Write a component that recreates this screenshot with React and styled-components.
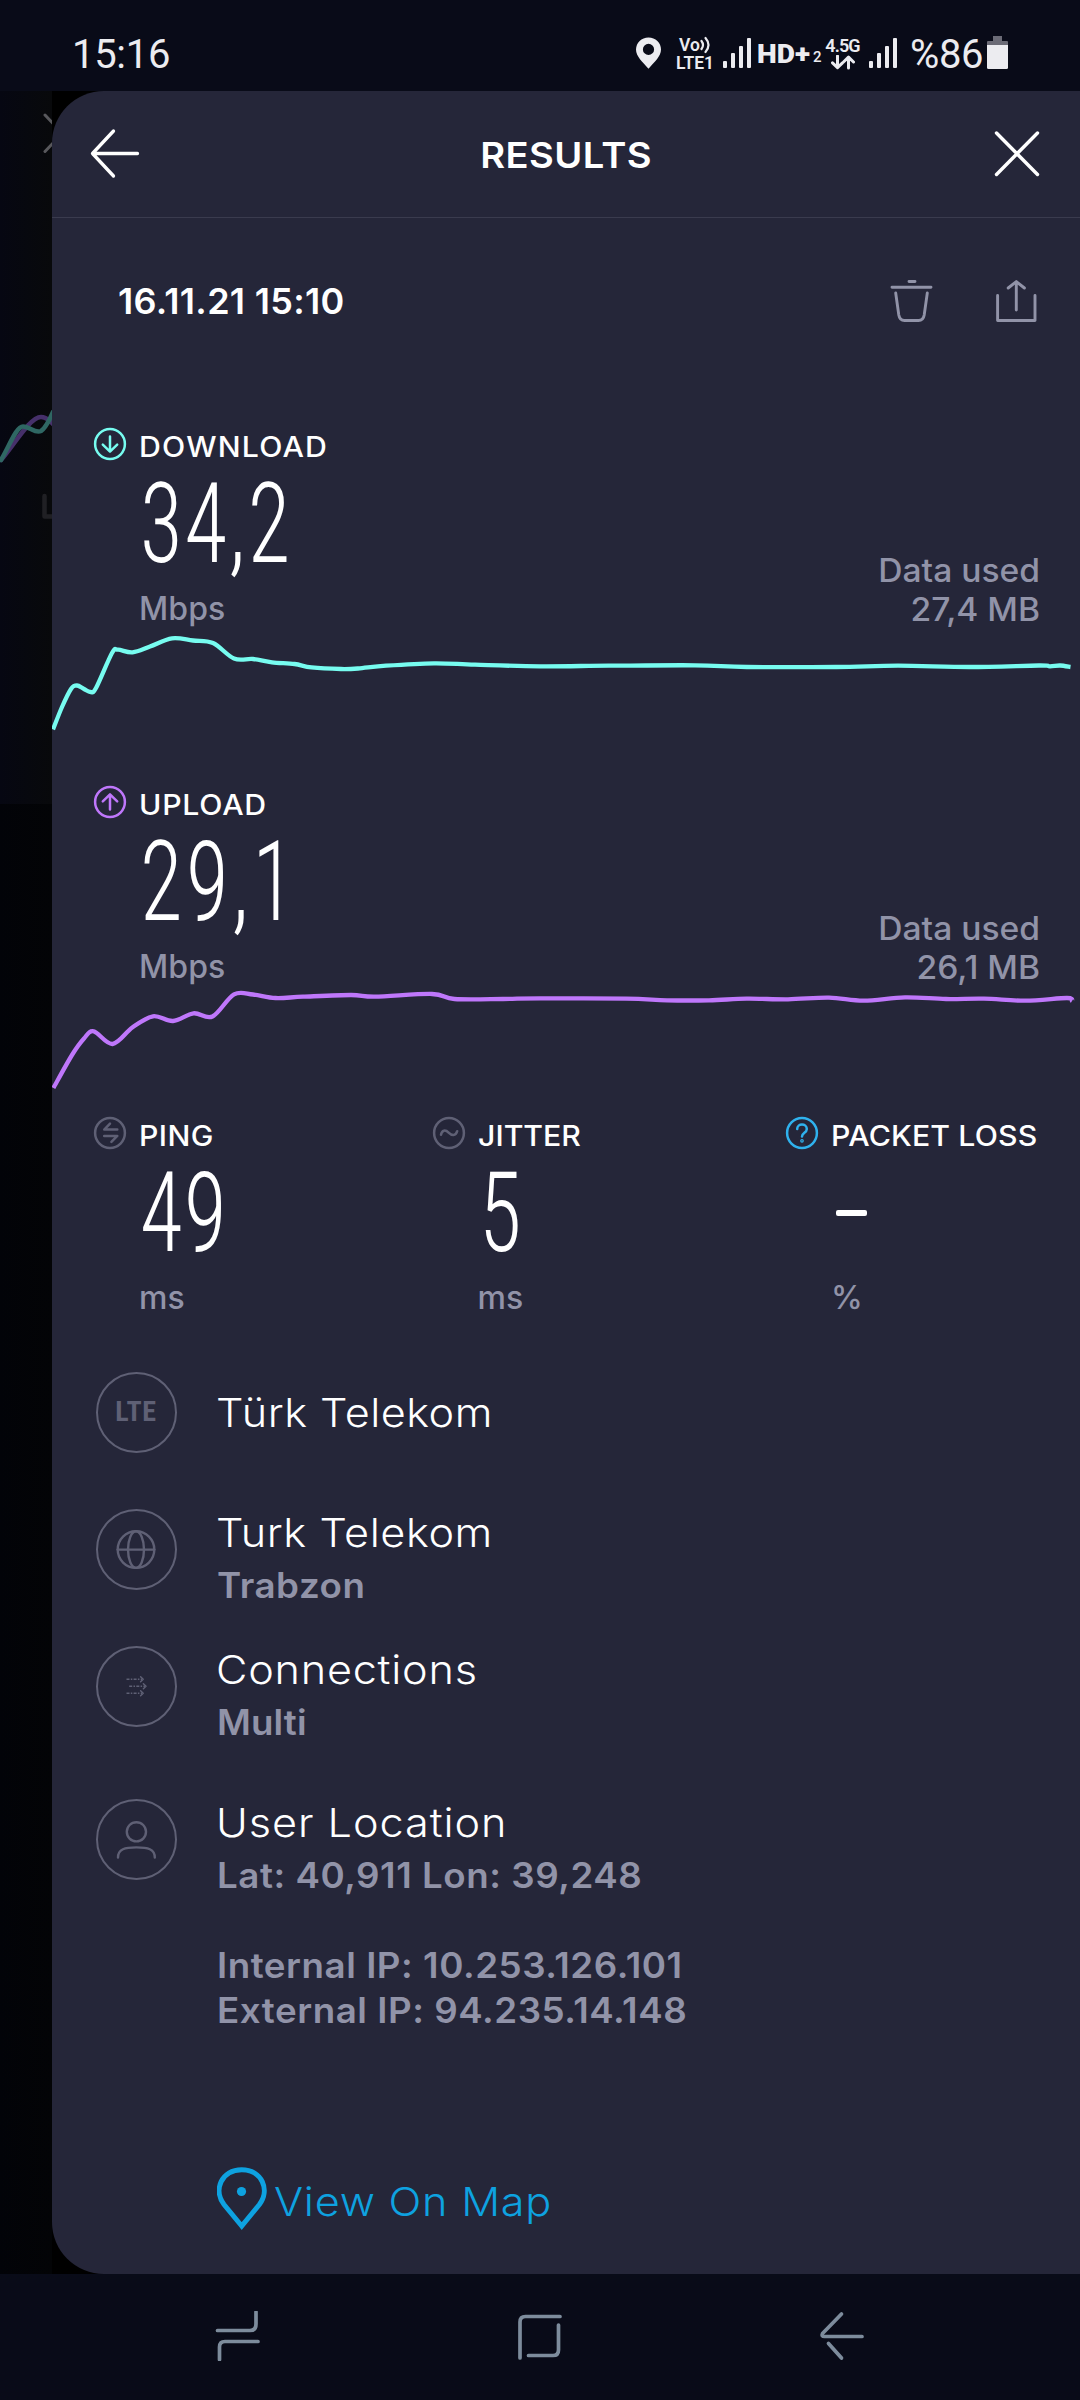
import React from "react";
import styled, { createGlobalStyle } from "styled-components";

const color = {
  bar: "#090b18",
  panel: "#252639",
  line: "#3a3b4e",
  muted: "#9193a8",
  ring: "#5f6075",
  teal: "#77fcf0",
  purple: "#bf77fb",
  blue: "#2fb2ee",
  link: "#0ea2e0",
  status: "#ececf0",
  nav: "#7d8c9c",
};

const GlobalStyle = createGlobalStyle`
  * { box-sizing: border-box; }
  body { margin: 0; background: #000; font-family: Inter, "Liberation Sans", sans-serif; color: #fff; }
  svg { display: block; flex: none; fill: none; stroke-linecap: round; stroke-linejoin: round; }
`;

const Screen = styled.div`
  width: 1080px;
  height: 2400px;
  display: flex;
  flex-direction: column;
  overflow: hidden;
  background: #000;
`;

/* Status bar */
const StatusBar = styled.header`
  height: 91px;
  padding: 17px 72px 0 72px;
  display: flex;
  align-items: center;
  justify-content: space-between;
  background: ${color.bar};
  color: ${color.status};
  font-family: Roboto, "Liberation Sans", sans-serif;
  white-space: nowrap;
`;
const Clock = styled.span`
  font-size: 40px;
  line-height: 48px;
  padding-top: 1px;
  letter-spacing: -0.3px;
`;
const StatusGroup = styled.div`
  display: flex;
  align-items: center;
`;
const PinSlot = styled.div`
  margin: 0 15px 3px 0;
`;
const Stack = styled.div`
  width: ${(p) => p.$width}px;
  margin-right: ${(p) => p.$after}px;
  display: flex;
  flex-direction: column;
  align-items: center;
`;
const StackText = styled.span`
  display: flex;
  align-items: center;
  font-size: ${(p) => p.$size || 17.5}px;
  font-weight: 600;
  line-height: 18px;
  letter-spacing: ${(p) => p.$spacing || 0}px;
`;
const Bars = styled.div`
  width: 28px;
  height: 30px;
  margin: 0 ${(p) => p.$after}px 2px 0;
  display: flex;
  align-items: flex-end;
  justify-content: space-between;
`;
const Bar = styled.i`
  width: 3.6px;
  height: ${(p) => p.$height}px;
  border-radius: 1px;
  background: ${color.status};
`;
const HdMark = styled.span`
  width: 53px;
  margin-right: 3px;
  font: 900 26px/30px Roboto, sans-serif;
  transform: scaleX(1.08);
  transform-origin: 0 50%;
`;
const SimIndex = styled.span`
  width: 9px;
  margin-right: 4px;
  padding-top: 6px;
  font: 500 15px/18px Roboto, sans-serif;
`;
const Percent = styled.span`
  width: 71px;
  margin-right: 6px;
  padding-top: 1px;
  font-size: 40px;
  line-height: 48px;
  letter-spacing: -0.4px;
`;
const BatterySlot = styled.div`
  margin-bottom: 3px;
`;

/* Body */
const Body = styled.div`
  height: 2183px;
  display: flex;
`;
const Backdrop = styled.div`
  width: 52px;
  display: flex;
  flex-direction: column;
  background: linear-gradient(90deg, #020308, #030406);
`;
const BackdropCard = styled.div`
  height: 713px;
  background: linear-gradient(90deg, #060712, #08090b);
`;
const Panel = styled.main`
  width: 1028px;
  background: ${color.panel};
  border-radius: 52px 0 0 52px;
  display: flex;
  flex-direction: column;
`;
const PanelHeader = styled.div`
  height: 127px;
  padding: 0 37px;
  display: flex;
  align-items: center;
  justify-content: space-between;
  border-bottom: 1px solid ${color.line};
`;
const Title = styled.h1`
  margin: 0;
  padding-top: 2px;
  font-size: 36px;
  line-height: 44px;
  font-weight: 560;
  letter-spacing: 0.4px;
  transform: scaleX(1.06);
`;
const DateRow = styled.div`
  height: 166px;
  padding: 0 42px 0 66px;
  display: flex;
  align-items: center;
`;
const DateText = styled.span`
  flex: 1;
  font-size: 36px;
  line-height: 44px;
  font-weight: 580;
  letter-spacing: 0.3px;
`;
const Actions = styled.div`
  display: flex;
  gap: 60px;
`;

/* Metrics */
const Section = styled.section`
  height: 358px;
  padding-top: 42px;
`;
const SectionTop = styled.div`
  padding: 0 40px 0 41px;
  display: flex;
  align-items: flex-end;
  justify-content: space-between;
`;
const LabelRow = styled.div`
  height: 40px;
  display: flex;
  align-items: center;
  gap: 12px;
`;
const IconSlot = styled.div`
  margin-bottom: 4px;
`;
const Label = styled.span`
  padding-top: 1px;
  font-size: 28px;
  line-height: 40px;
  font-weight: 540;
  letter-spacing: ${(p) => p.$spacing}px;
  white-space: nowrap;
  transform: scaleX(1.08);
  transform-origin: 0 50%;
`;
const Value = styled.div`
  width: max-content;
  margin-left: 47px;
  padding-top: 2px;
  font: 360 112px/112px "Roboto Condensed", "Liberation Sans Narrow", sans-serif;
  letter-spacing: ${(p) => p.$spacing || 2}px;
  transform: scaleX(0.78);
  transform-origin: 0 50%;
`;
const Dash = styled.div`
  width: 31px;
  height: 6px;
  margin: 55px 0 62px 51px;
  border-radius: 2px;
  background: #fff;
`;
const Unit = styled.div`
  margin: 9px 0 0 46px;
  color: ${color.muted};
  font-size: 32px;
  line-height: 40px;
  font-weight: 500;
  letter-spacing: 0.1px;
`;
const DataUsed = styled.div`
  color: ${color.muted};
  font-size: 32px;
  line-height: 39px;
  font-weight: 500;
  text-align: right;
  white-space: pre-line;
  transform: scaleX(1.05);
  transform-origin: 100% 50%;
`;
const Trio = styled.section`
  height: 272px;
  padding: 15px 0 0 41px;
  display: grid;
  grid-template-columns: 338.5px 353.5px auto;
  align-items: start;
`;

/* Details */
const Details = styled.div`
  padding-left: 44px;
`;
const DetailRow = styled.div`
  height: ${(p) => p.$height}px;
  display: flex;
  align-items: flex-start;
`;
const Ring = styled.div`
  width: 81px;
  height: 81px;
  margin: -0.5px 39px 0 -0.5px;
  border: 2px solid ${color.ring};
  border-radius: 50%;
  display: flex;
  align-items: center;
  justify-content: center;
  flex: none;
`;
const RingText = styled.span`
  color: ${color.ring};
  font: 700 28px/30px "Roboto Condensed", Roboto, sans-serif;
  letter-spacing: 0.6px;
`;
const DetailTitle = styled.div`
  width: max-content;
  margin-top: ${(p) => (p.$single ? 16 : -1)}px;
  font-size: 40px;
  line-height: 50px;
  font-weight: 330;
  letter-spacing: ${(p) => p.$spacing}px;
  transform: scaleX(1.08);
  transform-origin: 0 50%;
`;
const DetailSub = styled.div`
  width: max-content;
  margin: 5px 0 0 1px;
  color: ${color.muted};
  font-size: 35px;
  line-height: 45px;
  font-weight: 580;
  letter-spacing: ${(p) => p.$spacing}px;
  white-space: pre;
  transform: scaleX(1.05);
  transform-origin: 0 50%;
`;
const MapLink = styled.a`
  margin-left: 165px;
  height: 66px;
  display: flex;
  gap: 7px;
  color: ${color.link};
`;
const MapText = styled.span`
  padding-top: 11px;
  font-size: 40px;
  line-height: 50px;
  font-weight: 320;
  letter-spacing: 0.7px;
  transform: scaleX(1.08);
  transform-origin: 0 50%;
`;

const NavBar = styled.nav`
  height: 126px;
  padding: 37px 0 0 212px;
  display: flex;
  gap: 251.5px;
  background: ${color.bar};
`;

function smooth(points) {
  const k = 1 / 6;
  let d = `M${points[0][0]} ${points[0][1]}`;
  for (let i = 0; i < points.length - 1; i++) {
    const a = points[i - 1] || points[i];
    const b = points[i];
    const c = points[i + 1];
    const e = points[i + 2] || c;
    d += ` C${b[0] + (c[0] - a[0]) * k} ${b[1] + (c[1] - a[1]) * k} ${c[0] - (e[0] - b[0]) * k} ${c[1] - (e[1] - b[1]) * k} ${c[0]} ${c[1]}`;
  }
  return d;
}

const download = [
  [53, 729.5], [62, 707], [71, 689], [77, 685.5], [84, 689], [90.5, 692], [96, 688], [112, 653], [118, 649.7], [132.5, 652.3], [150, 646.5], [172, 638.3],
  [193, 640.5], [213, 643], [234, 658.5], [253, 659], [272, 662.3], [294.5, 664], [311.5, 667.4], [341, 669],
  [358, 668.5], [386, 665.7], [434, 663.3], [475, 664.7], [540, 666.3], [609, 665.7], [695, 665.3], [747, 667],
  [836, 667], [898, 665.7], [970, 667], [1039, 665.5], [1050, 666.3], [1060, 665.5], [1070.5, 667],
];
const upload = [
  [53.4, 1088], [72, 1055], [84, 1038.5], [93.7, 1031.3], [112.6, 1044], [132.6, 1027.3], [153, 1016.3], [173, 1021],
  [193.5, 1013.3], [212.5, 1016.5], [234, 994.3], [253, 994.5], [275.5, 998], [303, 996.7], [351, 995], [375, 996.7],
  [432, 994], [454.5, 999], [503, 999], [540, 998.3], [626, 998.7], [667, 1000.3], [709, 1000.3], [746.6, 998.7],
  [788, 999.3], [829, 997.7], [863.7, 1000.7], [905, 997.3], [946, 999], [984, 998.7], [1025.5, 1000.7], [1067, 998], [1072, 1001],
];

const Chart = ({ points, top, stroke }) => (
  <svg width="1028" height="113" viewBox={`52 ${top} 1028 113`}>
    <path d={smooth(points)} stroke={stroke} strokeWidth="4.3" strokeLinecap="butt" />
  </svg>
);

const glyphs = {
  down: <path d="M0 -7.5V7.5M-7.2 0.6L0 7.6L7.2 0.6" />,
  up: <path d="M0 7.5V-7.5M-7.2 -0.6L0 -7.6L7.2 -0.6" />,
  ping: <path d="M7.3 -3.4H-5.8L0 -9.3M-5.8 2.9H7.3L1.4 8.8" />,
  jitter: <path d="M-8 1.8C-7.2 -3 -3.6 -3.6 -0.4 -0.4S6.6 3.4 8.2 -1.8" />,
  help: (
    <>
      <path d="M-4.8 -4C-4.8 -10 4.8 -10 4.8 -4C4.8 0 0 -0.4 0 3.6" />
      <circle cx="0" cy="7.8" r="0.6" />
    </>
  ),
};
const Badge = ({ kind, tint }) => (
  <IconSlot>
    <svg width="34" height="34" viewBox="-17 -17 34 34" stroke={tint} strokeWidth="2.5">
      <circle r="14.9" />
      {glyphs[kind]}
    </svg>
  </IconSlot>
);

const Metric = ({ kind, tint, label, spacing, value, valueSpacing, unit }) => (
  <div>
    <LabelRow>
      <Badge kind={kind} tint={tint} />
      <Label $spacing={spacing}>{label}</Label>
    </LabelRow>
    {value ? <Value $spacing={valueSpacing}>{value}</Value> : <Dash />}
    <Unit>{unit}</Unit>
  </div>
);

const Signal = ({ after }) => (
  <Bars $after={after}>
    {[7, 15, 22, 30].map((h) => (
      <Bar key={h} $height={h} />
    ))}
  </Bars>
);

const ringIcons = {
  globe: (
    <g strokeWidth="2.4">
      <circle cy="0.6" r="18.3" />
      <ellipse cy="0.6" rx="8" ry="18.3" />
      <path d="M-18.3 0.6H18.3" />
    </g>
  ),
  multi: (
    <g strokeWidth="1.5">
      <path d="M-9.5 -6.7H6M-6.8 0.3H9M-9.5 7.3H6" strokeDasharray="3 1.3 1.5 1.3" strokeLinecap="butt" />
      <path d="M4.6 -9.2L7.2 -6.7L4.6 -4.2M7.4 -2.2L10 0.3L7.4 2.8M4.6 4.8L7.2 7.3L4.6 9.8" />
    </g>
  ),
  user: (
    <g strokeWidth="2.4">
      <circle cx="0.4" cy="-7.2" r="9.6" />
      <path d="M-18 18.6C-18 10 -11 8.4 0.4 8.4S18.8 10 18.8 18.6" />
    </g>
  ),
};
const RingIcon = ({ kind }) => (
  <svg width="60" height="60" viewBox="-30 -30 60 60" stroke={color.ring}>
    {ringIcons[kind]}
  </svg>
);

const Detail = ({ icon, title, titleSpacing, sub, subSpacing, height }) => (
  <DetailRow $height={height}>
    <Ring>{icon}</Ring>
    <div>
      <DetailTitle $single={!sub} $spacing={titleSpacing}>{title}</DetailTitle>
      {sub && <DetailSub $spacing={subSpacing}>{sub}</DetailSub>}
    </div>
  </DetailRow>
);

export default function App() {
  return (
    <Screen>
      <GlobalStyle />
      <StatusBar>
        <Clock>15:16</Clock>
        <StatusGroup>
          <PinSlot>
            <svg width="25" height="32" viewBox="0 0 25 32">
              <path fill={color.status} fillRule="evenodd" d="M12.5 0.5C5.5 0.5 0 5.8 0 12.6C0 19.5 6.6 25 12.5 31.8C18.4 25 25 19.5 25 12.6C25 5.8 19.5 0.5 12.5 0.5ZM12.5 6.8A5.6 5.6 0 1 1 12.5 18A5.6 5.6 0 1 1 12.5 6.8Z" />
            </svg>
          </PinSlot>
          <Stack $width={38} $after={9}>
            <StackText>
              Vo
              <svg width="11" height="18" viewBox="0 0 11 18" stroke={color.status} strokeWidth="2.2">
                <path d="M1.500 5Q4.500 9 1.500 13M5.500 2Q11.500 9 5.500 16" />
              </svg>
            </StackText>
            <StackText>LTE1</StackText>
          </Stack>
          <Signal after={6} />
          <HdMark>HD+</HdMark>
          <SimIndex>2</SimIndex>
          <Stack $width={33} $after={10}>
            <StackText $size={18} $spacing={-0.9}>4.5G</StackText>
            <svg width="24" height="16" viewBox="0 0 24 16" stroke={color.status} strokeWidth="3" strokeLinecap="butt" strokeLinejoin="miter">
              <path d="M6.500 1V12M1.500 7.800L6.500 12.600L11.500 7.800M17.500 13V3M12.500 7L17.500 2.200L22.500 7" />
            </svg>
          </Stack>
          <Signal after={13} />
          <Percent>%86</Percent>
          <BatterySlot>
            <svg width="21" height="33" viewBox="0 0 21 33">
              <path fill="#6b6b76" d="M6 0H15V5H20Q21 5 21 6V10H0V6Q0 5 1 5H6Z" />
              <path fill={color.status} d="M0 9H21V31.500Q21 33 19.500 33H1.500Q0 33 0 31.500Z" />
            </svg>
          </BatterySlot>
        </StatusGroup>
      </StatusBar>

      <Body>
        <Backdrop>
          <BackdropCard>
            <svg width="52" height="713" viewBox="0 91 52 713">
              <path d="M45 115L57 127.500M45 151.500L57 139" stroke="#58585c" strokeWidth="3" />
              <path d="M1 460C14 445 30 417 41 417Q47 417 54 425" stroke="#46306a" strokeWidth="4.500" />
              <path d="M1 460C9 447 16 426.500 23 426.500S35 434 41 431Q46 428 53 412" stroke="#2f6763" strokeWidth="4.500" />
              <path d="M44.500 496V516.500H54" stroke="#202024" strokeWidth="4.500" />
            </svg>
          </BackdropCard>
        </Backdrop>

        <Panel>
          <PanelHeader>
            <svg width="52" height="52" viewBox="0 0 52 52" stroke="#fff" strokeWidth="3.300">
              <path d="M48.500 25.500H3.500M24.500 3L3.500 25.500L24.500 48" />
            </svg>
            <Title>RESULTS</Title>
            <svg width="52" height="52" viewBox="0 0 52 52" stroke="#fff" strokeWidth="3.400">
              <path d="M5.500 5L46.500 46.500M46.500 5L5.500 46.500" />
            </svg>
          </PanelHeader>

          <DateRow>
            <DateText>16.11.21 15:10</DateText>
            <Actions>
              <svg width="44" height="44" viewBox="0 0 44 44" stroke={color.muted} strokeWidth="2.900">
                <path d="M19 2.500H25M2 8.300H41M5.700 14L8.800 36Q9.700 41.500 14.500 41.500H28.500Q33.300 41.500 34.200 36L37.300 14" />
              </svg>
              <svg width="44" height="44" viewBox="0 0 44 44" stroke={color.muted} strokeWidth="2.900">
                <path d="M3.600 16.500V41.500H41V16.500M22.300 31V2.800M14.200 9L22.300 2.600L30.400 9" />
              </svg>
            </Actions>
          </DateRow>

          <Section>
            <SectionTop>
              <Metric kind="down" tint={color.teal} label="DOWNLOAD" spacing={1.1} value="34,2" valueSpacing={2.5} unit="Mbps" />
              <DataUsed>{"Data used\n27,4 MB"}</DataUsed>
            </SectionTop>
            <Chart points={download} top={629} stroke={color.teal} />
          </Section>

          <Section>
            <SectionTop>
              <Metric kind="up" tint={color.purple} label="UPLOAD" spacing={0.7} value="29,1" valueSpacing={4.5} unit="Mbps" />
              <DataUsed>{"Data used\n26,1 MB"}</DataUsed>
            </SectionTop>
            <Chart points={upload} top={987} stroke={color.purple} />
          </Section>

          <Trio>
            <Metric kind="ping" tint={color.ring} label="PING" spacing={0.4} value="49" unit="ms" />
            <Metric kind="jitter" tint={color.ring} label="JITTER" spacing={0} value="5" unit="ms" />
            <Metric kind="help" tint={color.blue} label="PACKET LOSS" spacing={0.12} unit="%" />
          </Trio>

          <Details>
            <Detail height={137} icon={<RingText>LTE</RingText>} title="Türk Telekom" titleSpacing={0.45} />
            <Detail height={137} icon={<RingIcon kind="globe" />} title="Turk Telekom" titleSpacing={0.52} sub="Trabzon" subSpacing={0.5} />
            <Detail height={153} icon={<RingIcon kind="multi" />} title="Connections" titleSpacing={0.7} sub="Multi" subSpacing={0.1} />
            <Detail
              height={367}
              icon={<RingIcon kind="user" />}
              title="User Location"
              titleSpacing={0.88}
              sub={"Lat: 40,911 Lon: 39,248\n\nInternal IP: 10.253.126.101\nExternal IP: 94.235.14.148"}
              subSpacing={0.5}
            />
          </Details>

          <MapLink>
            <svg width="50" height="66" viewBox="0 0 50 66" stroke={color.link} strokeWidth="5">
              <path strokeLinejoin="miter" d="M24.700 60L7 38.500C-4 24 4.500 3.700 24.700 3.700S53.400 24 42.400 38.500Z" />
              <circle cx="24.500" cy="25.500" r="4.600" fill={color.link} stroke="none" />
            </svg>
            <MapText>View On Map</MapText>
          </MapLink>
        </Panel>
      </Body>

      <NavBar>
        <svg width="50" height="50" viewBox="0 0 50 50" stroke={color.nav} strokeWidth="3.700" strokeLinecap="butt">
          <path d="M44 1V13Q44 19.500 38 19.500H5.500M46 30.500H13Q7.500 30.500 7.500 36V48.500" />
        </svg>
        <svg width="50" height="50" viewBox="0 0 50 50" stroke={color.nav} strokeWidth="3.700" strokeLinecap="butt">
          <path d="M46 5.500H11.500Q6 5.500 6 11V47M44.500 14V39Q44.500 44.500 39 44.500H14.500" />
        </svg>
        <svg width="50" height="50" viewBox="0 0 50 50" stroke={color.nav} strokeWidth="3.700" strokeLinecap="butt">
          <path d="M26.500 3L7.500 22.500Q6 25.500 9.500 25.500H47M13.500 32.500L26.500 47" />
        </svg>
      </NavBar>
    </Screen>
  );
}
